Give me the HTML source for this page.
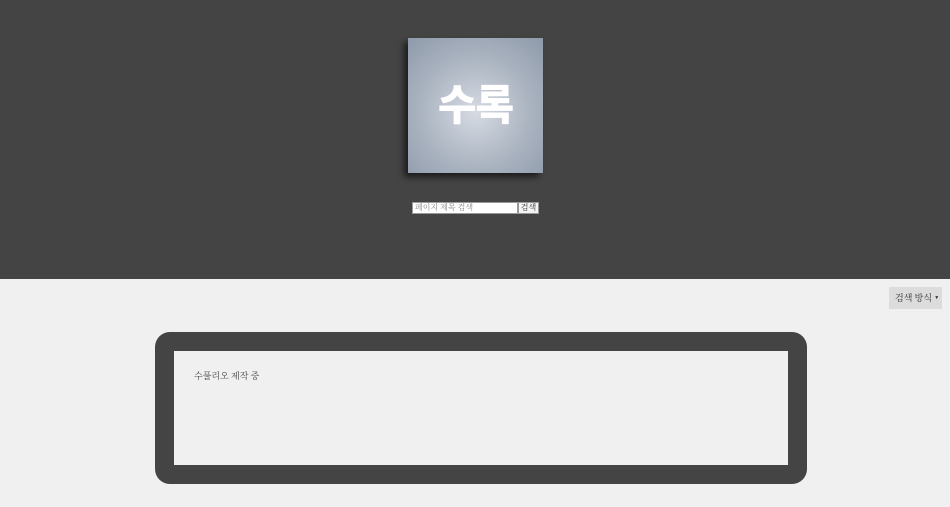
<!DOCTYPE html>
<html><head><meta charset="utf-8"><style>
*{margin:0;padding:0;box-sizing:border-box}
body{width:950px;height:507px;background:#f0f0f0;font-family:"Liberation Serif","Noto Serif CJK SC",serif;position:relative;overflow:hidden}
.hd{position:absolute;left:0;top:0;width:950px;height:279px;background:#444}
.logo{position:absolute;left:408px;top:38px;width:135px;height:135px;background:radial-gradient(circle at 50% 55%,#d6dbe3 0%,#aab3c0 55%,#8e9aaa 100%);box-shadow:-4px 4px 6px rgba(0,0,0,.6);color:#fff;font:900 42px "Noto Sans CJK KR",sans-serif;display:flex;align-items:center;justify-content:center;letter-spacing:-1px;padding-bottom:6px}
.in{position:absolute;left:412px;top:202px;width:106px;height:12px;background:#fff;border:1px solid #999;font-size:8px;color:#888;line-height:10px;padding-left:2px;white-space:nowrap}
.bt{position:absolute;left:518px;top:202px;width:21px;height:12px;background:#f4f4f4;border:1px solid #999;font-size:8px;color:#333;line-height:10px;text-align:center;white-space:nowrap}
.dd{position:absolute;left:889px;top:287px;width:53px;height:22px;background:#dcdcdc;font-size:9px;color:#333;line-height:22px;padding-left:6px;white-space:nowrap}
.box{position:absolute;left:155px;top:332px;width:652px;height:152px;background:#444;border-radius:15px}
.inner{position:absolute;left:174px;top:351px;width:614px;height:114px;background:#f0f0f0;font-size:9px;color:#444;padding:18px 0 0 20px}
</style></head><body>
<div class="hd"></div>
<div class="logo">수록</div>
<div class="in">페이지 제목 검색</div>
<div class="bt">검색</div>
<div class="dd">검색 방식 <span style="font-size:5px;vertical-align:middle">▼</span></div>
<div class="box"></div>
<div class="inner">수풀리오 제작 중</div>
</body></html>
